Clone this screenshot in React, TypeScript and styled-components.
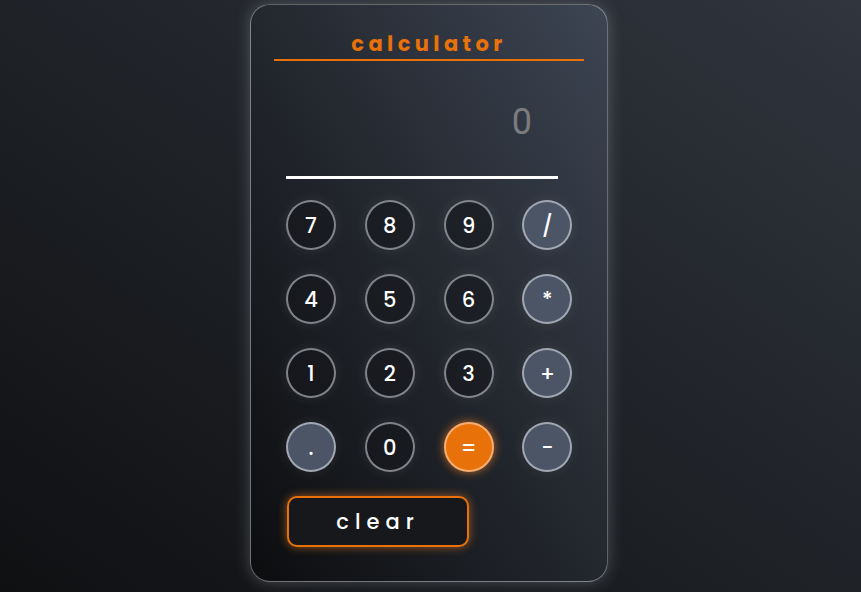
import React from "react";
import styled, { createGlobalStyle, css } from "styled-components";

const GlobalStyle = createGlobalStyle`
  html, body { margin: 0; padding: 0; }
  body {
    background: linear-gradient(to top right, #0f1012 0%, #1f2227 50%, #30353e 100%);
    min-height: 100vh;
    font-family: "Poppins", "Inter", "Noto Sans", sans-serif;
  }
`;

const Page = styled.div`
  min-height: 100vh;
  box-sizing: border-box;
  padding: 4px 3px 0 0;
  display: flex;
  justify-content: center;
  align-items: flex-start;
`;

const Card = styled.div`
  box-sizing: border-box;
  width: 358px;
  border: 1px solid rgba(255, 255, 255, 0.35);
  border-radius: 20px;
  background: linear-gradient(to top right, #0c0d0f 0%, #23272e 50%, #3d4553 100%);
  box-shadow: 0 0 16px rgba(190, 195, 205, 0.3);
  padding: 0 0 34px;
  display: flex;
  flex-direction: column;
`;

const Title = styled.h1`
  margin: 27px 23px 0 23px;
  padding-bottom: 3px;
  border-bottom: 2px solid #e8710a;
  color: #e8710a;
  text-align: center;
  font-size: 21px;
  line-height: 24px;
  font-weight: 700;
  letter-spacing: 4.4px;
`;

const Display = styled.div`
  margin: 40px 0 0 35px;
  width: 272px;
  box-sizing: border-box;
  padding: 0 26px 33px 0;
  line-height: 42px;
  font-size: 36px;
  font-family: Roboto, "Liberation Sans", sans-serif;
  color: #7b7c7e;
  text-align: right;
  border-bottom: 3px solid #ffffff;
`;

const Keys = styled.div`
  margin: 21px 0 0 35px;
  display: grid;
  grid-template-columns: repeat(4, 50px);
  column-gap: 28.8px;
  row-gap: 24px;
`;

type Variant = "num" | "op" | "eq";

const Key = styled.button<{ $variant: Variant }>`
  width: 50px;
  height: 50px;
  box-sizing: border-box;
  border-radius: 50%;
  border: 2px solid rgba(200, 204, 210, 0.6);
  background: rgba(22, 24, 29, 0.6);
  color: #ffffff;
  font-family: "Poppins", "Inter", sans-serif;
  font-size: 21px;
  font-weight: 500;
  padding: 0;
  display: flex;
  align-items: center;
  justify-content: center;
  box-shadow: 0 0 14px rgba(255, 255, 255, 0.08);
  ${({ $variant }) =>
    $variant === "op" &&
    css`
      background: #4b5566;
      border-color: rgba(190, 196, 206, 0.75);
    `}
  ${({ $variant }) =>
    $variant === "eq" &&
    css`
      background: #e8710a;
      border-color: #f6ad72;
      box-shadow: 0 0 10px rgba(240, 130, 40, 0.75);
    `}
`;

const Clear = styled.button`
  margin: 24px 0 0 36px;
  width: 182px;
  height: 51px;
  box-sizing: border-box;
  border-radius: 10px;
  border: 2px solid #e8710a;
  background: #16181b;
  box-shadow: 0 0 10px rgba(240, 130, 40, 0.6);
  color: #ffffff;
  font-family: "Poppins", "Inter", sans-serif;
  font-size: 21px;
  font-weight: 500;
  letter-spacing: 6px;
  padding: 0;
`;

const keys: { label: string; variant: Variant }[] = [
  { label: "7", variant: "num" },
  { label: "8", variant: "num" },
  { label: "9", variant: "num" },
  { label: "/", variant: "op" },
  { label: "4", variant: "num" },
  { label: "5", variant: "num" },
  { label: "6", variant: "num" },
  { label: "*", variant: "op" },
  { label: "1", variant: "num" },
  { label: "2", variant: "num" },
  { label: "3", variant: "num" },
  { label: "+", variant: "op" },
  { label: ".", variant: "op" },
  { label: "0", variant: "num" },
  { label: "=", variant: "eq" },
  { label: "-", variant: "op" },
];

export default function App() {
  return (
    <>
      <GlobalStyle />
      <Page>
        <Card>
          <Title>calculator</Title>
          <Display>0</Display>
          <Keys>
            {keys.map((k) => (
              <Key key={k.label} $variant={k.variant}>
                {k.label}
              </Key>
            ))}
          </Keys>
          <Clear>clear</Clear>
        </Card>
      </Page>
    </>
  );
}
